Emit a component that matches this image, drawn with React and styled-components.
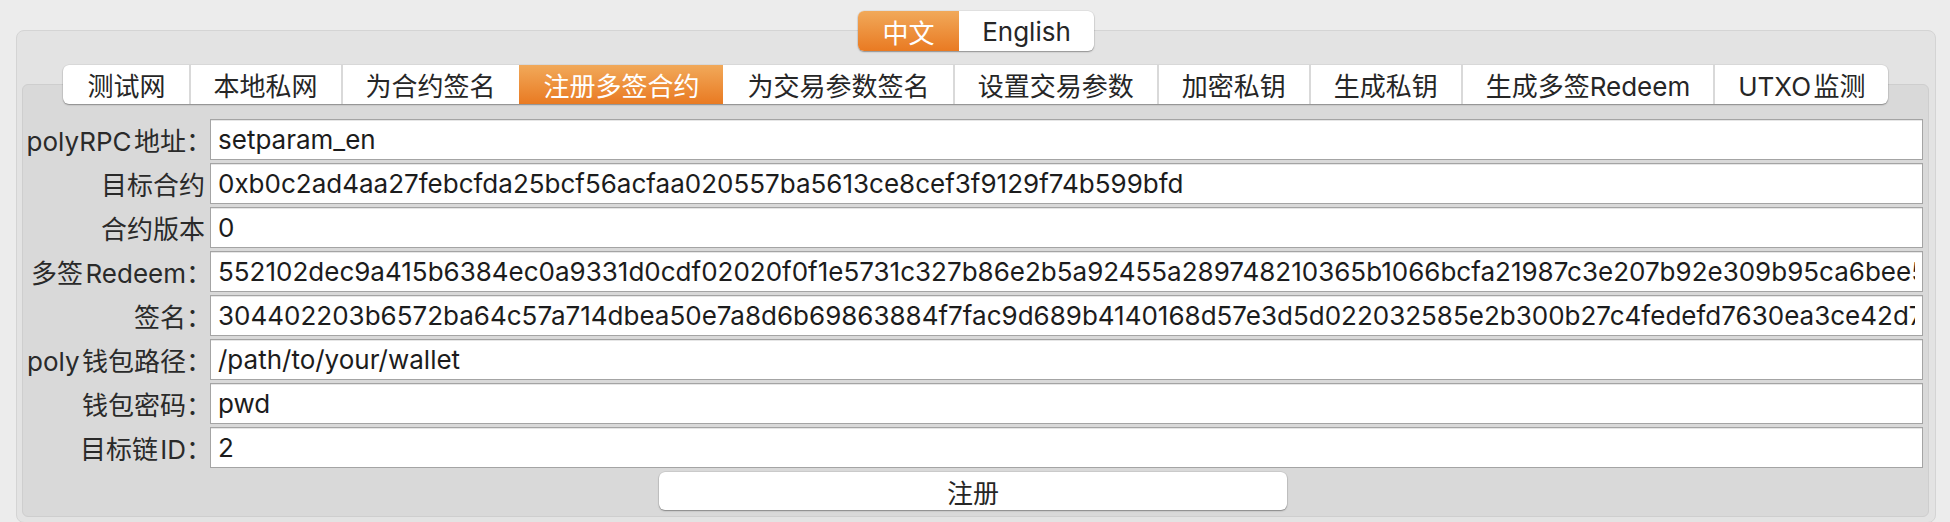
import React, { useState } from 'react'
import styled, { createGlobalStyle, css } from 'styled-components'

const GlobalStyle = createGlobalStyle`
  html, body {
    margin: 0;
    padding: 0;
    background: #ececec;
  }
  body {
    font-family: Inter, "Noto Sans CJK SC", sans-serif;
    font-size: 26px;
    color: #222;
  }
  * { box-sizing: border-box; }
`

const Page = styled.div`
  padding: 11px 14px 0 16px;
  height: 522px;
  overflow: hidden;
`

// 顶部语言切换
const SegmentRow = styled.div`
  display: flex;
  justify-content: center;
  position: relative;
  z-index: 2;
  margin-bottom: -21px;
`

const activeOrange = css`
  background: linear-gradient(#f1a95a, #e97a22);
  color: #fff;
`

const Segmented = styled.div`
  display: flex;
  height: 40px;
  border-radius: 6px;
  background: #fff;
  box-shadow: 0 1px 1.5px rgba(0, 0, 0, 0.35), 0 0 0 0.5px rgba(0, 0, 0, 0.08);
  overflow: hidden;
`

const SegmentItem = styled.div`
  display: flex;
  align-items: center;
  justify-content: center;
  width: ${(p) => p.$w}px;
  color: #262626;
  cursor: default;
  ${(p) => p.$active && activeOrange}
`

const GroupBox = styled.div`
  background: #e3e3e3;
  border: 1px solid #d4d4d4;
  border-radius: 8px;
  padding: 34px 6px 5px 5px;
`

// 탭 바
const TabBar = styled.div`
  display: flex;
  justify-content: center;
  position: relative;
  z-index: 2;
  margin-bottom: -20px;
`

const Tabs = styled.div`
  display: flex;
  height: 39px;
  background: #fff;
  border-radius: 6px;
  overflow: hidden;
  box-shadow: 0 1px 1.5px rgba(0, 0, 0, 0.35), 0 0 0 0.5px rgba(0, 0, 0, 0.08);
`

const Tab = styled.div`
  display: flex;
  align-items: center;
  padding: 0 23px;
  white-space: nowrap;
  color: #262626;
  cursor: default;
  border-left: 2px solid ${(p) => (p.$divider ? '#d9d9d9' : 'transparent')};
  ${(p) => p.$active && activeOrange}
`

const Pane = styled.div`
  background: #d9d9d9;
  border: 1px solid #cecece;
  border-radius: 6px;
  padding: 34px 5px 6px 0;
`

const Form = styled.div`
  display: grid;
  grid-template-columns: 182px 1fr;
  column-gap: 5px;
  row-gap: 3px;
`

const Label = styled.label`
  display: flex;
  align-items: center;
  justify-content: flex-end;
  height: 41px;
  white-space: nowrap;
  color: #2a2a2a;
`

const Colon = styled.span`
  margin-right: -7px;
`

const Field = styled.input`
  height: 41px;
  width: 100%;
  min-width: 0;
  border: 1px solid #a4a4a4;
  border-radius: 0;
  background: #fff;
  padding: 0 7px;
  margin: 0;
  font: inherit;
  color: #1c1c1c;
  outline: none;
  box-shadow: inset 0 1px 0 #e6e6e6;
`

const ButtonRow = styled.div`
  display: flex;
  justify-content: center;
  margin-top: 4px;
`

const Button = styled.button`
  width: 628px;
  height: 38px;
  background: #fff;
  border: none;
  border-radius: 6px;
  box-shadow: 0 1px 1.5px rgba(0, 0, 0, 0.35), 0 0 0 0.5px rgba(0, 0, 0, 0.12);
  font: inherit;
  color: #262626;
  padding: 0;
  cursor: default;
`

const tabs = [
  '测试网',
  '本地私网',
  '为合约签名',
  '注册多签合约',
  '为交易参数签名',
  '设置交易参数',
  '加密私钥',
  '生成私钥',
  '生成多签Redeem',
  'UTXO\u200a监测',
]

const fields = [
  { label: 'polyRPC\u200a地址', colon: true, value: 'setparam_en' },
  { label: '目标合约', value: '0xb0c2ad4aa27febcfda25bcf56acfaa020557ba5613ce8cef3f9129f74b599bfd' },
  { label: '合约版本', value: '0' },
  {
    label: '多签\u200aRedeem',
    colon: true,
    value:
      '552102dec9a415b6384ec0a9331d0cdf02020f0f1e5731c327b86e2b5a92455a289748210365b1066bcfa21987c3e207b92e309b95ca6bee5a3f2c08d7e19b04c5f3a21a7b2c53ae',
  },
  {
    label: '签名',
    colon: true,
    value:
      '304402203b6572ba64c57a714dbea50e7a8d6b69863884f7fac9d689b4140168d57e3d5d022032585e2b300b27c4fedefd7630ea3ce42d7c9e41b0a5f3d2c18e7b6a01',
  },
  { label: 'poly\u200a钱包路径', colon: true, value: '/path/to/your/wallet' },
  { label: '钱包密码', colon: true, value: 'pwd' },
  { label: '目标链\u200aID', colon: true, value: '2' },
]

export default function App() {
  const [lang, setLang] = useState('zh')
  const [active, setActive] = useState(3)
  const [values, setValues] = useState(fields.map((f) => f.value))

  const onChange = (idx) => (e) => {
    const next = [...values]
    next[idx] = e.target.value
    setValues(next)
  }

  return (
    <>
      <GlobalStyle />
      <Page>
        <SegmentRow>
          <Segmented>
            <SegmentItem $w={101} $active={lang === 'zh'} onClick={() => setLang('zh')}>
              中文
            </SegmentItem>
            <SegmentItem $w={135} $active={lang === 'en'} onClick={() => setLang('en')}>
              English
            </SegmentItem>
          </Segmented>
        </SegmentRow>

        <GroupBox>
          <TabBar>
            <Tabs>
              {tabs.map((t, idx) => (
                <Tab
                  key={t}
                  $active={idx === active}
                  $divider={idx > 0 && idx !== active && idx !== active + 1}
                  onClick={() => setActive(idx)}
                >
                  {t}
                </Tab>
              ))}
            </Tabs>
          </TabBar>

          <Pane>
            <Form>
              {fields.map((f, idx) => (
                <React.Fragment key={f.label}>
                  <Label>
                    {f.label}
                    {f.colon && <Colon>：</Colon>}
                  </Label>
                  <Field value={values[idx]} onChange={onChange(idx)} spellCheck={false} />
                </React.Fragment>
              ))}
            </Form>
            <ButtonRow>
              <Button>注册</Button>
            </ButtonRow>
          </Pane>
        </GroupBox>
      </Page>
    </>
  )
}
